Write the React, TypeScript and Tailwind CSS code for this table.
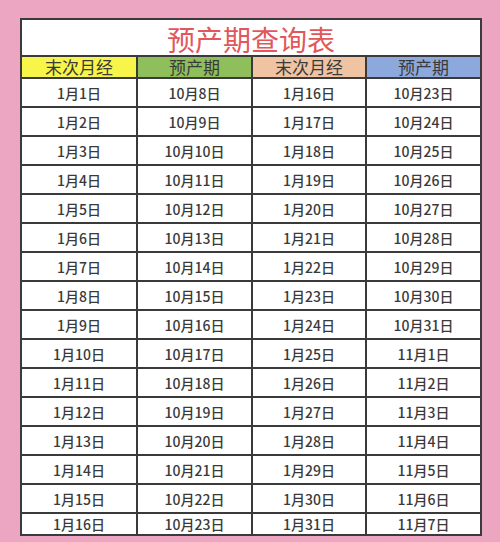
import React from 'react';

const rows: [string, string, string, string][] = Array.from({ length: 16 }, (_, i) => {
  const a = `1月${i + 1}日`;
  const b = `10月${i + 8}日`;
  const c = `1月${i + 16}日`;
  const d = i + 23 <= 31 ? `10月${i + 23}日` : `11月${i - 8}日`;
  return [a, b, c, d];
});

const headers = [
  { label: '末次月经', bg: 'bg-[#f7f44a]' },
  { label: '预产期', bg: 'bg-[#8fbf5a]' },
  { label: '末次月经', bg: 'bg-[#f0c4a3]' },
  { label: '预产期', bg: 'bg-[#8da8dc]' },
];

export default function App() {
  return (
    <div
      className="w-[500px] h-[542px] bg-[#eda6c2] pt-[18px] pl-[20px] overflow-hidden"
      style={{ fontFamily: '"Noto Sans CJK SC", "Noto Sans", sans-serif' }}
    >
      <table className="w-[460px] border-collapse table-fixed text-[#333]">
        <colgroup>
          <col className="w-[116px]" />
          <col className="w-[115px]" />
          <col className="w-[114px]" />
          <col className="w-[115px]" />
        </colgroup>
        <thead>
          <tr className="h-[37px] bg-white">
            <th
              colSpan={4}
              className="border-2 border-[#3a3a3a] text-[28px] leading-[24px] font-normal text-[#e2575a] pt-[3px]"
            >
              预产期查询表
            </th>
          </tr>
          <tr className="h-[22px]">
            {headers.map((h, i) => (
              <th
                key={i}
                className={`border-2 border-[#3a3a3a] ${h.bg} text-[17px] leading-[16px] font-normal text-[#3a3a3a]`}
              >
                {h.label}
              </th>
            ))}
          </tr>
        </thead>
        <tbody>
          {rows.map((r, i) => (
            <tr key={i} className={i === 15 ? 'h-[22px] bg-white' : 'h-[29px] bg-white'}>
              {r.map((c, j) => (
                <td
                  key={j}
                  className="border-2 border-[#3a3a3a] text-center text-[14px] leading-none font-medium text-[#3a3a3a]"
                >
                  {c}
                </td>
              ))}
            </tr>
          ))}
        </tbody>
      </table>
    </div>
  );
}
